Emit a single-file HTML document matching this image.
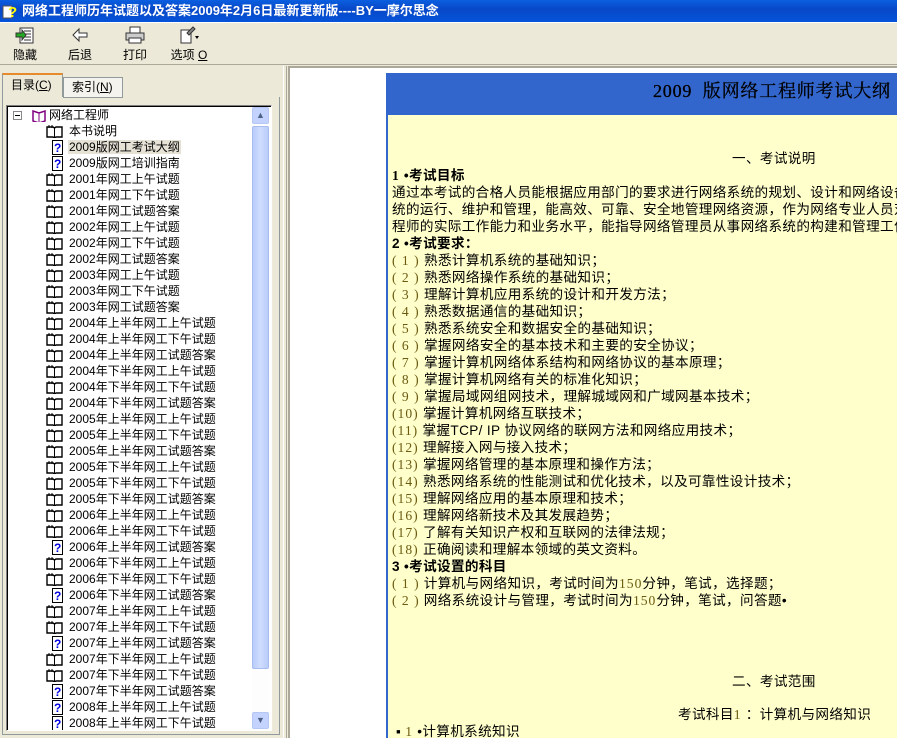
<!DOCTYPE html>
<html><head><meta charset="utf-8"><style>
*{margin:0;padding:0;box-sizing:border-box}
body{width:897px;height:738px;overflow:hidden;background:#ece9d8;font-family:"Liberation Sans","WenQuanYi Zen Hei","Noto Sans CJK SC",sans-serif;font-size:12px;color:#000;position:relative}
.abs{position:absolute}
#title{left:0;top:0;width:897px;height:22px;background:linear-gradient(#0a5fe0,#0848c8 40%,#0553d8);color:#fff;font-weight:bold;font-size:13px;line-height:22px;padding-left:22px;white-space:nowrap}
.tb{top:26px;text-align:center;font-size:12px;width:50px}
.tb svg{display:block;margin:0 auto 2px}
#tree{left:6px;top:105px;width:266px;height:626px;background:#fff;border:1px solid #7f7f7f;border-right-color:#fff;border-bottom-color:#fff;box-shadow:inset 1px 1px 0 #000;overflow:hidden}
.row{position:absolute;left:0;height:16px;line-height:16px;white-space:nowrap;font-size:12px}
.ic{position:absolute;top:1px}
#right{left:288px;top:66px;width:609px;height:672px;background:#fff;border-top:2px solid #aca899;border-left:2px solid #aca899;overflow:hidden}
#box{position:absolute;left:96px;top:5px;width:600px;height:700px;background:#ffffcc;border-left:2px solid #3366cc;border-top:2px solid #3366cc}
#hdr{position:absolute;left:0;top:0;width:600px;height:40px;background:#3366cc}
.l{position:absolute;left:4px;white-space:nowrap;font-size:13.6px;line-height:17px;letter-spacing:0.35px}
.n{color:#6b5a10;font-family:"Liberation Serif",serif;letter-spacing:1px}
b{font-weight:bold}
</style></head><body>
<div id="title" class="abs">网络工程师历年试题以及答案2009年2月6日最新更新版----BY一摩尔思念</div>
<svg class="abs" style="left:2px;top:3px" width="16" height="16"><rect x="1" y="3" width="9" height="12" fill="#fff" stroke="#555"/><text x="6" y="14" font-size="15" font-weight="bold" fill="#ff0">?</text></svg>
<div class="abs" style="left:0;top:22px;width:897px;height:1px;background:#fff"></div>
<div class="tb abs" style="left:0"><svg width="20" height="18"><rect x="5" y="2" width="13" height="15" fill="#fff" stroke="#333"/><path d="M9 5h7M9 8h7M9 11h7M9 14h7" stroke="#333"/><path d="M1 7h6v-3l4 5-4 5v-3H1z" fill="#2a2" stroke="#333"/></svg>隐藏</div>
<div class="tb abs" style="left:55px"><svg width="20" height="18"><path d="M3 9l6-6v4h8v4H9v4z" fill="#fff" stroke="#333"/></svg>后退</div>
<div class="tb abs" style="left:110px"><svg width="22" height="18"><rect x="6" y="1" width="10" height="6" fill="#fff" stroke="#333"/><rect x="2" y="7" width="18" height="7" fill="#ccc" stroke="#333"/><rect x="5" y="12" width="12" height="5" fill="#fff" stroke="#333"/></svg>打印</div>
<div class="tb abs" style="left:164px;width:50px"><svg width="22" height="18"><rect x="3" y="4" width="10" height="13" fill="#fff" stroke="#333"/><path d="M9 7l6-6 2 2-6 6z" fill="#888" stroke="#333"/><path d="M17 10h4l-2 3z" fill="#000"/></svg>选项 <span style="text-decoration:underline">O</span></div>
<div class="abs" style="left:0;top:64px;width:897px;height:1px;background:#aca899"></div>
<div class="abs" style="left:2px;top:73px;width:61px;height:24px;background:#ece9d8;border:1px solid #919b9c;border-bottom:none;border-top:2px solid #e68b2c;font-size:12px;line-height:20px;padding-left:8px">目录(<u>C</u>)</div>
<div class="abs" style="left:63px;top:77px;width:60px;height:21px;background:#f4f3ee;border:1px solid #919b9c;font-size:12px;line-height:19px;padding-left:8px">索引(<u>N</u>)</div>
<div class="abs" style="left:2px;top:97px;width:278px;height:638px;border:1px solid #919b9c;border-top:none"></div>
<div id="tree" class="abs">
<div class="row" style="top:1px;left:6px"><svg class="ic" width="9" height="9" style="top:4px"><rect x="0.5" y="0.5" width="8" height="8" fill="#fff" stroke="#888"/><path d="M2 4.5h5" stroke="#000"/></svg></div>
<div class="row" style="top:1px;left:24px"><svg class="ic" width="16" height="14"><path d="M2 3l6 2 6-2v10l-6 2-6-2z" fill="#fff" stroke="#800080" stroke-width="1.5"/><path d="M8 5v9" stroke="#800080"/></svg><span style="margin-left:18px">网络工程师</span></div>
<div id="items"></div>
<div class="abs" style="left:245px;top:1px;width:17px;height:622px;background:#fdfdfd">
<div class="abs" style="left:0;top:0;width:17px;height:17px;background:#c3d3fd;border:1px solid #b5c8f5;border-radius:2px;text-align:center;font-size:9px;color:#4d6185;line-height:15px">▲</div>
<div class="abs" style="left:0;top:19px;width:17px;height:543px;background:linear-gradient(90deg,#b9cdfc,#cfdcfd 50%,#b9cdfc);border:1px solid #a8bcef;border-radius:2px"></div>
<div class="abs" style="left:0;top:605px;width:17px;height:17px;background:#c3d3fd;border:1px solid #b5c8f5;border-radius:2px;text-align:center;font-size:9px;color:#4d6185;line-height:15px">▼</div>
</div>
</div>
<div class="abs" style="left:283px;top:66px;width:1px;height:672px;background:#fff"></div>
<div class="abs" style="left:286px;top:66px;width:1px;height:672px;background:#aca899"></div>
<div id="right" class="abs">
<div id="box">
<div id="hdr"><div style="position:absolute;left:265px;top:2px;font-family:'Liberation Serif','Noto Serif CJK SC',serif;font-size:18px;letter-spacing:0.8px;white-space:nowrap;-webkit-text-stroke:0.3px #000">2009&nbsp; 版网络工程师考试大纲</div></div>
<div class="l" style="left:344px;top:75px">一、考试说明</div>
<div class="l" style="top:92px"><b><span class="n" style="color:#000">1</span> •考试目标</b></div>
<div class="l" style="top:109px">通过本考试的合格人员能根据应用部门的要求进行网络系统的规划、设计和网络设备的软硬件安装调试工作</div>
<div class="l" style="top:126px">统的运行、维护和管理，能高效、可靠、安全地管理网络资源，作为网络专业人员对系统开发进行技术支持</div>
<div class="l" style="top:143px">程师的实际工作能力和业务水平，能指导网络管理员从事网络系统的构建和管理工作。</div>
<div class="l" style="top:160px"><b>2 •考试要求：</b></div>
<div id="reqs"></div>
<div class="l" style="top:483px"><b>3 •考试设置的科目</b></div>
<div class="l" style="top:500px"><span class="n">( 1 )</span> 计算机与网络知识，考试时间为<span class="n">150</span>分钟，笔试，选择题；</div>
<div class="l" style="top:517px"><span class="n">( 2 )</span> 网络系统设计与管理，考试时间为<span class="n">150</span>分钟，笔试，问答题•</div>
<div class="l" style="left:344px;top:598px">二、考试范围</div>
<div class="l" style="left:290px;top:631px">考试科目<span class="n">1</span> ：计算机与网络知识</div>
<div class="l" style="left:8px;top:648px">▪ <span class="n">1</span> •计算机系统知识</div>
</div>
</div>
<script>
var it=[["本书说明","b"],["2009版网工考试大纲","q"],["2009版网工培训指南","q"],["2001年网工上午试题","b"],["2001年网工下午试题","b"],["2001年网工试题答案","b"],["2002年网工上午试题","b"],["2002年网工下午试题","b"],["2002年网工试题答案","b"],["2003年网工上午试题","b"],["2003年网工下午试题","b"],["2003年网工试题答案","b"]];
["2004年上半年","2004年下半年","2005年上半年","2005年下半年","2006年上半年","2006年下半年","2007年上半年","2007年下半年"].forEach(function(p){var qa=p>="2006";it.push([p+"网工上午试题","b"],[p+"网工下午试题","b"],[p+"网工试题答案",qa?"q":"b"]);});
it.push(["2008年上半年网工上午试题","q"],["2008年上半年网工下午试题","q"]);
var h="";it.forEach(function(a,i){var t=17+i*16;var ic=a[1]=="b"?'<svg class="ic" style="left:-22px" width="17" height="14"><path d="M1 3h6l1.5 1 1.5-1h6v10h-6l-1.5 1-1.5-1H1z" fill="#fff" stroke="#000" stroke-width="1.4"/><path d="M8.5 4v9M3 1v3M6 1v3" stroke="#000"/></svg>':'<svg class="ic" style="left:-16px" width="11" height="15"><rect x="0.5" y="0.5" width="10" height="14" fill="#fff" stroke="#000"/><text x="2" y="12" font-size="12" font-weight="bold" fill="#0000e0" font-family="Liberation Sans">?</text></svg>';h+='<div class="row" style="top:'+t+'px;left:61px">'+ic+'<span style="padding:0 1px;'+(i==1?'background:#e6e3d6':'')+'">'+a[0]+'</span></div>';});
document.getElementById("items").innerHTML=h;
var r=["熟悉计算机系统的基础知识；","熟悉网络操作系统的基础知识；","理解计算机应用系统的设计和开发方法；","熟悉数据通信的基础知识；","熟悉系统安全和数据安全的基础知识；","掌握网络安全的基本技术和主要的安全协议；","掌握计算机网络体系结构和网络协议的基本原理；","掌握计算机网络有关的标准化知识；","掌握局域网组网技术，理解城域网和广域网基本技术；","掌握计算机网络互联技术；","掌握TCP/ IP 协议网络的联网方法和网络应用技术；","理解接入网与接入技术；","掌握网络管理的基本原理和操作方法；","熟悉网络系统的性能测试和优化技术，以及可靠性设计技术；","理解网络应用的基本原理和技术；","理解网络新技术及其发展趋势；","了解有关知识产权和互联网的法律法规；","正确阅读和理解本领域的英文资料。"];
var s="";r.forEach(function(x,i){var n=i<9?"( "+(i+1)+" ) ":"("+(i+1)+") ";s+='<div class="l" style="top:'+(177+i*17)+'px"><span class="n">'+n+'</span>'+x+'</div>';});
document.getElementById("reqs").innerHTML=s;
</script>
</body></html>
